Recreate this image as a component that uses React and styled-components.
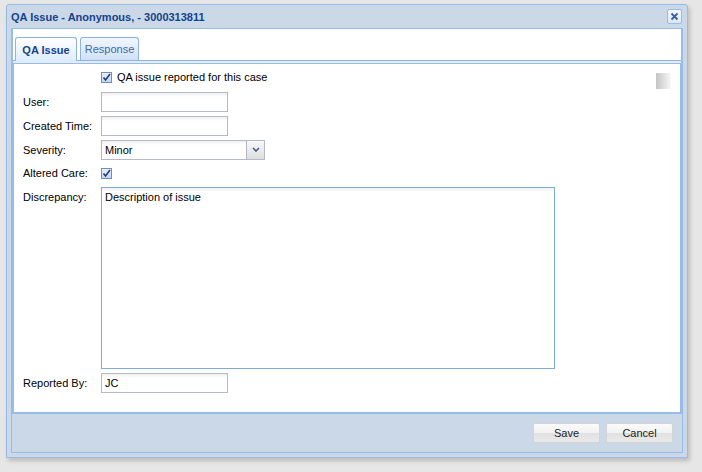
import React from "react";
import styled, { createGlobalStyle } from "styled-components";

const Global = createGlobalStyle`
  html, body { margin: 0; padding: 0; background: #e6e6e6; }
  body { font-family: "Liberation Sans", Arial, sans-serif; font-size: 11px; color: #000; }
`;

const Page = styled.div`
  width: 702px;
  height: 472px;
  padding: 4px 0 0 6px;
  box-sizing: border-box;
`;

const Window = styled.div`
  width: 682px;
  height: 454px;
  box-sizing: border-box;
  background: #cbd8e8;
  border: 1px solid #99bbe8;
  border-radius: 3px 3px 0 0;
  box-shadow: 2px 3px 4px rgba(0, 0, 0, 0.18);
  display: flex;
  flex-direction: column;
  padding: 0 4px 4px 4px;
`;

const TitleBar = styled.div`
  height: 23px;
  flex: none;
  display: flex;
  align-items: center;
  justify-content: space-between;
  font-weight: bold;
  color: #15428b;
  font-size: 11px;
`;

const CloseBtn = styled.div`
  width: 13px;
  height: 13px;
  border: 1px solid #99bbe8;
  border-radius: 2px;
  background: linear-gradient(#f4f8fd, #dbe6f4);
  display: flex;
  align-items: center;
  justify-content: center;
  margin-right: 1px;
`;

const Frame = styled.div`
  flex: 1;
  display: flex;
  flex-direction: column;
  border: 1px solid #99bbe8;
  border-top: none;
  background: #cbd8e8;
`;

const Body = styled.div`
  flex: 1;
  background: #fff;
  border: 1px solid #99bbe8;
  display: flex;
  flex-direction: column;
`;

const TabStrip = styled.div`
  display: flex;
  align-items: flex-end;
  gap: 3px;
  padding: 9px 0 0 2px;
  border-bottom: 1px solid #8db2e3;
  height: 32px;
  box-sizing: border-box;
`;

const Tab = styled.div`
  height: ${(p) => (p.$active ? "24px" : "23px")};
  width: ${(p) => p.$w}px;
  box-sizing: border-box;
  display: flex;
  align-items: center;
  justify-content: center;
  border: 1px solid #8db2e3;
  border-bottom: none;
  border-radius: 3px 3px 0 0;
  background: ${(p) =>
    p.$active ? "linear-gradient(#ffffff, #deecfd)" : "linear-gradient(#f1f6fd, #d0e1f6)"};
  color: ${(p) => (p.$active ? "#15428b" : "#416aa3")};
  font-weight: ${(p) => (p.$active ? "bold" : "normal")};
  margin-bottom: ${(p) => (p.$active ? "-1px" : "0")};
  position: relative;
  z-index: ${(p) => (p.$active ? 1 : 0)};
`;

const Band = styled.div`
  height: 2px;
  background: #deecfd;
`;

const Panel = styled.div`
  flex: 1;
  border: 1px solid #99bbe8;
  position: relative;
  padding: 0 0 0 9px;
`;

const Spinner = styled.div`
  position: absolute;
  right: 9px;
  top: 9px;
  width: 15px;
  height: 16px;
  background: linear-gradient(to right, #c4c4c4, #f8f8f8);
`;

const Row = styled.div`
  display: flex;
  align-items: ${(p) => (p.$top ? "flex-start" : "center")};
  height: ${(p) => p.$h || 24}px;
  padding-top: ${(p) => p.$pt || 0}px;
  padding-left: ${(p) => p.$indent || 0}px;
  box-sizing: border-box;
`;

const Label = styled.div`
  width: 78px;
  flex: none;
  padding-top: ${(p) => p.$pt || 0}px;
`;

const Field = styled.div`
  width: ${(p) => p.$w || 127}px;
  height: ${(p) => p.$h || 20}px;
  box-sizing: border-box;
  border: 1px solid ${(p) => (p.$focus ? "#7eadd9" : "#b5b8c8")};
  background: linear-gradient(#f0f0f0, #fff 4px);
  padding: 3px 3px;
  font-size: 11px;
`;

const Combo = styled.div`
  display: flex;
  width: 164px;
  height: 20px;
  box-sizing: border-box;
  border: 1px solid #b5b8c8;
`;

const ComboText = styled.div`
  flex: 1;
  padding: 3px 3px;
  background: linear-gradient(#f0f0f0, #fff 4px);
`;

const Trigger = styled.div`
  width: 17px;
  border-left: 1px solid #b5b8c8;
  background: linear-gradient(#f8f8f8, #dedede);
  display: flex;
  align-items: center;
  justify-content: center;
`;

const Check = styled.div`
  width: 9px;
  height: 9px;
  border: 1px solid #6d8fc0;
  background: linear-gradient(#e9f0fb, #c6d7ef);
  display: flex;
  align-items: center;
  justify-content: center;
  margin-right: ${(p) => p.$mr || 0}px;
`;

const Footer = styled.div`
  height: 38px;
  flex: none;
  display: flex;
  justify-content: flex-end;
  align-items: center;
  gap: 6px;
  padding-right: 9px;
`;

const Button = styled.div`
  width: 67px;
  height: 20px;
  box-sizing: border-box;
  border: 1px solid #d4d4d4;
  border-radius: 2px;
  background: linear-gradient(#fbfbfb 0%, #f1f1f1 50%, #e1e1e1 51%, #e9e9e9 100%);
  display: flex;
  align-items: center;
  justify-content: center;
  color: #222;
`;

const Tick = () => (
  <svg width="9" height="9" viewBox="0 0 9 9">
    <path d="M1.5 4.5 L3.6 7 L8 1" fill="none" stroke="#1f3f7a" strokeWidth="1.6" />
  </svg>
);

export default function App() {
  return (
    <Page>
      <Global />
      <Window>
        <TitleBar>
          <span>QA Issue - Anonymous, - 3000313811</span>
          <CloseBtn>
            <svg width="9" height="9" viewBox="0 0 9 9">
              <path d="M1.5 1.5 L7.5 7.5 M7.5 1.5 L1.5 7.5" stroke="#3a5f96" strokeWidth="1.8" />
            </svg>
          </CloseBtn>
        </TitleBar>
        <Frame>
          <Body>
            <TabStrip>
              <Tab $active $w={62}>QA Issue</Tab>
              <Tab $w={59}>Response</Tab>
            </TabStrip>
            <Band />
            <Panel>
              <Spinner />
              <Row $h={26} $indent={78}>
                <Check $mr={5}><Tick /></Check>
                QA issue reported for this case
              </Row>
              <Row>
                <Label>User:</Label>
                <Field />
              </Row>
              <Row>
                <Label>Created Time:</Label>
                <Field />
              </Row>
              <Row $h={23}>
                <Label>Severity:</Label>
                <Combo>
                  <ComboText>Minor</ComboText>
                  <Trigger>
                    <svg width="8" height="5" viewBox="0 0 8 5">
                      <path d="M1 1 L4 4 L7 1" fill="none" stroke="#3e5f8f" strokeWidth="1.6" />
                    </svg>
                  </Trigger>
                </Combo>
              </Row>
              <Row>
                <Label>Altered Care:</Label>
                <Check><Tick /></Check>
              </Row>
              <Row $h={186} $top $pt={2}>
                <Label $pt={4}>Discrepancy:</Label>
                <Field $w={454} $h={182} $focus>Description of issue</Field>
              </Row>
              <Row>
                <Label>Reported By:</Label>
                <Field>JC</Field>
              </Row>
            </Panel>
          </Body>
          <Footer>
            <Button>Save</Button>
            <Button>Cancel</Button>
          </Footer>
        </Frame>
      </Window>
    </Page>
  );
}
